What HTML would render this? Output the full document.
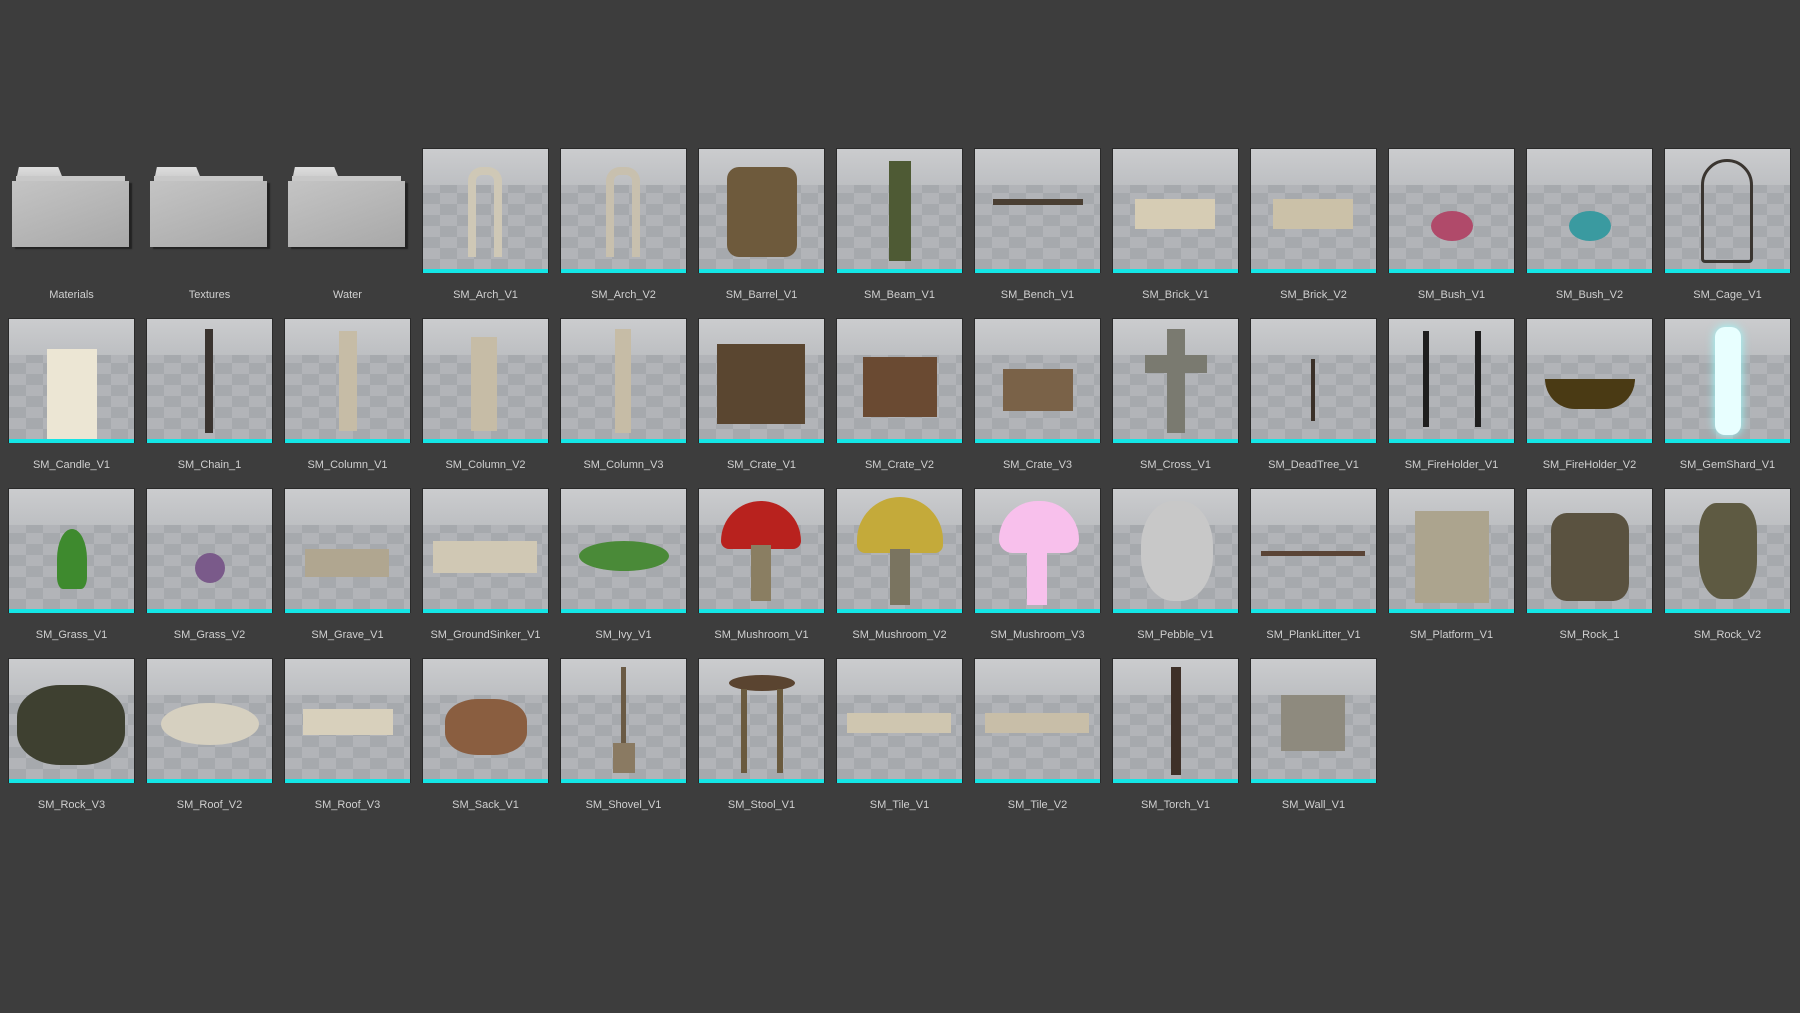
<!DOCTYPE html>
<html><head><meta charset="utf-8"><style>
html,body{margin:0;padding:0;background:#3d3d3d;width:1800px;height:1013px;overflow:hidden;font-family:"Liberation Sans",sans-serif}
.g{position:absolute;left:8px;top:148px;display:grid;grid-template-columns:repeat(13,127px);column-gap:11px;grid-auto-rows:170px}
.c{position:relative;width:127px}
.t{position:relative;width:125px;height:124px;border:1px solid #2a2a2a;border-bottom:none;overflow:hidden;
background:repeating-conic-gradient(#b2b4b8 0 25%,#a6a9ad 0 50%) 0 0/34px 22px;}
.t:before{content:"";position:absolute;left:0;right:0;top:0;height:36px;background:linear-gradient(180deg,#cbccce,#bdbfc2)}
.t:after{content:"";position:absolute;left:0;right:0;bottom:0;height:4px;background:#14e6e6}
.l{position:absolute;top:141px;left:-10px;width:147px;text-align:center;color:#d0d0d0;font-size:11px}
.f{position:absolute;left:4px;top:19px;width:117px;height:80px}
.f .tab{position:absolute;left:4px;top:0;width:48px;height:14px;background:linear-gradient(#dedede,#c8c8c8);clip-path:polygon(6% 0,88% 0,100% 100%,0 100%)}
.f .b2{position:absolute;left:4px;top:9px;width:109px;height:8px;background:#c8c8c8}
.f .b{position:absolute;left:0;top:14px;width:117px;height:66px;background:linear-gradient(160deg,#c4c4c4,#a8a8a8);box-shadow:3px 2px 1px #222}
.o{position:absolute}
</style></head><body><div class="g">
<div class="c"><div class="f"><div class="tab"></div><div class="b2"></div><div class="b"></div></div><div class="l">Materials</div></div>
<div class="c"><div class="f"><div class="tab"></div><div class="b2"></div><div class="b"></div></div><div class="l">Textures</div></div>
<div class="c"><div class="f"><div class="tab"></div><div class="b2"></div><div class="b"></div></div><div class="l">Water</div></div>
<div class="c"><div class="t"><div class="o" style="left:45px;top:18px;width:34px;height:90px;border:8px solid #cfc8b6;border-bottom:none;border-radius:14px 14px 0 0;box-sizing:border-box"></div></div><div class="l">SM_Arch_V1</div></div>
<div class="c"><div class="t"><div class="o" style="left:45px;top:18px;width:34px;height:90px;border:8px solid #c8c0ae;border-bottom:none;border-radius:14px 14px 0 0;box-sizing:border-box"></div></div><div class="l">SM_Arch_V2</div></div>
<div class="c"><div class="t"><div class="o" style="left:28px;top:18px;width:70px;height:90px;background:#6e5a3c;border-radius:12px"></div></div><div class="l">SM_Barrel_V1</div></div>
<div class="c"><div class="t"><div class="o" style="left:52px;top:12px;width:22px;height:100px;background:#4e5a34"></div></div><div class="l">SM_Beam_V1</div></div>
<div class="c"><div class="t"><div class="o" style="left:18px;top:50px;width:90px;height:6px;background:#4a3f33"></div></div><div class="l">SM_Bench_V1</div></div>
<div class="c"><div class="t"><div class="o" style="left:22px;top:50px;width:80px;height:30px;background:#d6ccb4"></div></div><div class="l">SM_Brick_V1</div></div>
<div class="c"><div class="t"><div class="o" style="left:22px;top:50px;width:80px;height:30px;background:#cbc1a8"></div></div><div class="l">SM_Brick_V2</div></div>
<div class="c"><div class="t"><div class="o" style="left:42px;top:62px;width:42px;height:30px;background:#b04a6a;border-radius:50%"></div></div><div class="l">SM_Bush_V1</div></div>
<div class="c"><div class="t"><div class="o" style="left:42px;top:62px;width:42px;height:30px;background:#3a9aa0;border-radius:50%"></div></div><div class="l">SM_Bush_V2</div></div>
<div class="c"><div class="t"><div class="o" style="left:36px;top:10px;width:52px;height:104px;border:3px solid #3a3530;border-radius:26px 26px 4px 4px;box-sizing:border-box"></div></div><div class="l">SM_Cage_V1</div></div>

<div class="c"><div class="t"><div class="o" style="left:38px;top:30px;width:50px;height:92px;background:#ece6d4"></div></div><div class="l">SM_Candle_V1</div></div>
<div class="c"><div class="t"><div class="o" style="left:58px;top:10px;width:8px;height:104px;background:#3a3430"></div></div><div class="l">SM_Chain_1</div></div>
<div class="c"><div class="t"><div class="o" style="left:54px;top:12px;width:18px;height:100px;background:#c6bca6"></div></div><div class="l">SM_Column_V1</div></div>
<div class="c"><div class="t"><div class="o" style="left:48px;top:18px;width:26px;height:94px;background:#c6bca6"></div></div><div class="l">SM_Column_V2</div></div>
<div class="c"><div class="t"><div class="o" style="left:54px;top:10px;width:16px;height:104px;background:#c6bca6"></div></div><div class="l">SM_Column_V3</div></div>
<div class="c"><div class="t"><div class="o" style="left:18px;top:25px;width:88px;height:80px;background:#5a4630"></div></div><div class="l">SM_Crate_V1</div></div>
<div class="c"><div class="t"><div class="o" style="left:26px;top:38px;width:74px;height:60px;background:#6a4a32"></div></div><div class="l">SM_Crate_V2</div></div>
<div class="c"><div class="t"><div class="o" style="left:28px;top:50px;width:70px;height:42px;background:#7a6248"></div></div><div class="l">SM_Crate_V3</div></div>
<div class="c"><div class="t"><div class="o" style="left:54px;top:10px;width:18px;height:104px;background:#7a7a70"></div><div class="o" style="left:32px;top:36px;width:62px;height:18px;background:#7a7a70"></div></div><div class="l">SM_Cross_V1</div></div>
<div class="c"><div class="t"><div class="o" style="left:60px;top:40px;width:4px;height:62px;background:#3a3028"></div></div><div class="l">SM_DeadTree_V1</div></div>
<div class="c"><div class="t"><div class="o" style="left:34px;top:12px;width:58px;height:96px;border:6px solid #1e1e1e;border-top:none;border-bottom:none;box-sizing:border-box"></div></div><div class="l">SM_FireHolder_V1</div></div>
<div class="c"><div class="t"><div class="o" style="left:18px;top:60px;width:90px;height:30px;background:#4a3a14;border-radius:0 0 45px 45px"></div></div><div class="l">SM_FireHolder_V2</div></div>
<div class="c"><div class="t"><div class="o" style="left:50px;top:8px;width:26px;height:108px;background:#e8ffff;border-radius:10px;box-shadow:0 0 10px #9ff"></div></div><div class="l">SM_GemShard_V1</div></div>

<div class="c"><div class="t"><div class="o" style="left:48px;top:40px;width:30px;height:60px;background:#3e8a2e;border-radius:50% 50% 20% 20%"></div></div><div class="l">SM_Grass_V1</div></div>
<div class="c"><div class="t"><div class="o" style="left:48px;top:64px;width:30px;height:30px;background:#7a5a8a;border-radius:50%"></div></div><div class="l">SM_Grass_V2</div></div>
<div class="c"><div class="t"><div class="o" style="left:20px;top:60px;width:84px;height:28px;background:#b0a690"></div></div><div class="l">SM_Grave_V1</div></div>
<div class="c"><div class="t"><div class="o" style="left:10px;top:52px;width:104px;height:32px;background:#d0c8b4"></div></div><div class="l">SM_GroundSinker_V1</div></div>
<div class="c"><div class="t"><div class="o" style="left:18px;top:52px;width:90px;height:30px;background:#4a8a38;border-radius:50%"></div></div><div class="l">SM_Ivy_V1</div></div>
<div class="c"><div class="t"><div class="o" style="left:22px;top:12px;width:80px;height:48px;background:#b8221e;border-radius:40px 40px 8px 8px"></div><div class="o" style="left:52px;top:56px;width:20px;height:56px;background:#8a7e62"></div></div><div class="l">SM_Mushroom_V1</div></div>
<div class="c"><div class="t"><div class="o" style="left:20px;top:8px;width:86px;height:56px;background:#c4aa3a;border-radius:43px 43px 8px 8px"></div><div class="o" style="left:53px;top:60px;width:20px;height:56px;background:#7a7460"></div></div><div class="l">SM_Mushroom_V2</div></div>
<div class="c"><div class="t"><div class="o" style="left:24px;top:12px;width:80px;height:52px;background:#f8c0ec;border-radius:40px 40px 14px 14px"></div><div class="o" style="left:52px;top:56px;width:20px;height:60px;background:#f8c0ec"></div></div><div class="l">SM_Mushroom_V3</div></div>
<div class="c"><div class="t"><div class="o" style="left:28px;top:12px;width:72px;height:100px;background:#c8c8c8;border-radius:45%"></div></div><div class="l">SM_Pebble_V1</div></div>
<div class="c"><div class="t"><div class="o" style="left:10px;top:62px;width:104px;height:5px;background:#5a4436"></div></div><div class="l">SM_PlankLitter_V1</div></div>
<div class="c"><div class="t"><div class="o" style="left:26px;top:22px;width:74px;height:92px;background:#aca48e"></div></div><div class="l">SM_Platform_V1</div></div>
<div class="c"><div class="t"><div class="o" style="left:24px;top:24px;width:78px;height:88px;background:#5a5240;border-radius:20%"></div></div><div class="l">SM_Rock_1</div></div>
<div class="c"><div class="t"><div class="o" style="left:34px;top:14px;width:58px;height:96px;background:#5e5a42;border-radius:30% 30% 40% 40%"></div></div><div class="l">SM_Rock_V2</div></div>

<div class="c"><div class="t"><div class="o" style="left:8px;top:26px;width:108px;height:80px;background:#3e4030;border-radius:40%"></div></div><div class="l">SM_Rock_V3</div></div>
<div class="c"><div class="t"><div class="o" style="left:14px;top:44px;width:98px;height:42px;background:#d6d0c0;border-radius:50%"></div></div><div class="l">SM_Roof_V2</div></div>
<div class="c"><div class="t"><div class="o" style="left:18px;top:50px;width:90px;height:26px;background:#d8d0bc"></div></div><div class="l">SM_Roof_V3</div></div>
<div class="c"><div class="t"><div class="o" style="left:22px;top:40px;width:82px;height:56px;background:#8a5e40;border-radius:40%"></div></div><div class="l">SM_Sack_V1</div></div>
<div class="c"><div class="t"><div class="o" style="left:60px;top:8px;width:5px;height:80px;background:#6a5a44"></div><div class="o" style="left:52px;top:84px;width:22px;height:30px;background:#8a7a62"></div></div><div class="l">SM_Shovel_V1</div></div>
<div class="c"><div class="t"><div class="o" style="left:30px;top:16px;width:66px;height:16px;background:#5a4430;border-radius:50%"></div><div class="o" style="left:42px;top:30px;width:42px;height:84px;border:6px solid #6a5a3e;border-top:none;border-bottom:none;box-sizing:border-box"></div></div><div class="l">SM_Stool_V1</div></div>
<div class="c"><div class="t"><div class="o" style="left:10px;top:54px;width:104px;height:20px;background:#cfc6b0"></div></div><div class="l">SM_Tile_V1</div></div>
<div class="c"><div class="t"><div class="o" style="left:10px;top:54px;width:104px;height:20px;background:#c8bea8"></div></div><div class="l">SM_Tile_V2</div></div>
<div class="c"><div class="t"><div class="o" style="left:58px;top:8px;width:10px;height:108px;background:#3e3028"></div></div><div class="l">SM_Torch_V1</div></div>
<div class="c"><div class="t"><div class="o" style="left:30px;top:36px;width:64px;height:56px;background:#8e8a7e"></div></div><div class="l">SM_Wall_V1</div></div>
</div></body></html>
